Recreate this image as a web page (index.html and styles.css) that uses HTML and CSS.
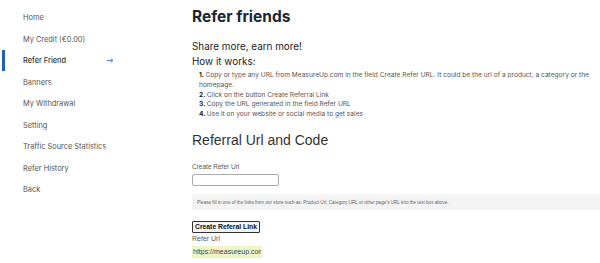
FILE: index.html
```html
<!DOCTYPE html>
<html>
<head>
<meta charset="utf-8">
<link rel="stylesheet" href="styles.css">
</head>
<body>
<div class="page">
  <nav class="sidebar">
    <a class="nav-item">Home</a>
    <a class="nav-item">My Credit (€0.00)</a>
    <a class="nav-item active">Refer Friend
      <svg class="arrow" width="7" height="5" viewBox="0 0 7 5"><path d="M0 2.5H6M4 0.8L6 2.5L4 4.2" fill="none" stroke="#3b82f6" stroke-width="1"/></svg>
    </a>
    <a class="nav-item">Banners</a>
    <a class="nav-item">My Withdrawal</a>
    <a class="nav-item">Setting</a>
    <a class="nav-item">Traffic Source Statistics</a>
    <a class="nav-item">Refer History</a>
    <a class="nav-item">Back</a>
  </nav>
  <main class="main">
    <h1 class="title">Refer friends</h1>
    <p class="lead share">Share more, earn more!</p>
    <p class="lead how">How it works:</p>
    <ol class="steps">
      <li>Copy or type any URL from MeasureUp.com in the field Create Refer URL. It could be the url of a product, a category or the homepage.</li>
      <li>Click on the button Create Referral Link</li>
      <li>Copy the URL generated in the field Refer URL</li>
      <li>Use it on your website or social media to get sales</li>
    </ol>
    <h2 class="section">Referral Url and Code</h2>
    <label class="label">Create Refer Url</label>
    <input class="field" type="text">
    <div class="hint">Please fill in one of the links from our store such as: Product Url, Category URL or other page's URL into the text box above.</div>
    <button class="btn">Create Referal Link</button>
    <div class="label2">Refer Url</div>
    <input class="result" type="text" value="https://measureup.com/?ref=12345" readonly>
  </main>
</div>
</body>
</html>
```
FILE: styles.css
```css
html, body {
  margin: 0;
  padding: 0;
  background: #fff;
  overflow: hidden;
}
.page {
  display: flex;
  font-family: Inter, "Noto Sans", sans-serif;
  color: #444;
}
.sidebar {
  width: 192px;
  flex: none;
  padding-top: 7px;
  display: flex;
  flex-direction: column;
}
.nav-item {
  position: relative;
  height: 21.5px;
  display: flex;
  align-items: center;
  padding-left: 23px;
  font-size: 7.4px;
  color: #555;
}
.nav-item.active {
  color: #333;
  font-weight: 500;
}
.nav-item.active::before {
  content: "";
  position: absolute;
  left: 2px;
  top: 0;
  width: 2.5px;
  height: 21px;
  background: #1d5fc4;
}
.arrow {
  position: absolute;
  left: 107px;
  top: 8px;
}
.main {
  flex: 1;
  min-width: 0;
  padding-right: 4px;
}
.title {
  margin: 7px 0 0;
  font-size: 15.5px;
  line-height: 20px;
  font-weight: 700;
  color: #1e2633;
}
.lead {
  margin: 0;
  font-size: 9.9px;
  line-height: 13px;
  color: #222;
}
.share {
  margin-top: 13px;
}
.how {
  margin-top: 2px;
}
.steps {
  list-style: none;
  counter-reset: step;
  margin: 3px 0 0;
  padding-left: 7px;
  font-size: 6.6px;
  line-height: 9.8px;
  color: #555;
}
.steps li {
  counter-increment: step;
}
.steps li::before {
  content: counter(step) ". ";
  font-weight: 700;
  color: #222;
}
.section {
  margin: 11px 0 0;
  font-family: "Liberation Sans", Arial, sans-serif;
  font-weight: 400;
  font-size: 14px;
  line-height: 18px;
  color: #333;
}
.label {
  display: block;
  margin-top: 13px;
  font-family: "Liberation Sans", Arial, sans-serif;
  font-size: 6.5px;
  line-height: 9px;
  color: #555;
}
.field {
  display: block;
  box-sizing: border-box;
  margin-top: 3px;
  width: 87px;
  height: 12px;
  border: 1px solid #aaa;
  border-radius: 2px;
  padding: 0 3px;
}
.hint {
  margin-top: 8px;
  margin-right: -10px;
  background: #f3f3f3;
  border-top: 1px solid #f8f8f8;
  height: 15px;
  padding-left: 5px;
  display: flex;
  align-items: center;
  font-family: "Liberation Sans", Arial, sans-serif;
  font-size: 4.6px;
  color: #666;
  white-space: nowrap;
}
.btn {
  display: block;
  margin-top: 11px;
  height: 12px;
  padding: 0 2px;
  box-sizing: border-box;
  border: 1.5px solid #333;
  border-radius: 1px;
  background: #f4f4f4;
  font-family: "Liberation Sans", Arial, sans-serif;
  font-weight: 700;
  font-size: 6.8px;
  line-height: 9px;
  color: #111;
}
.label2 {
  margin-top: 1px;
  font-family: "Liberation Sans", Arial, sans-serif;
  font-size: 7px;
  line-height: 10px;
  color: #555;
}
.result {
  display: block;
  box-sizing: border-box;
  margin-top: 2px;
  width: 70px;
  height: 12px;
  border: none;
  background: #eef5c7;
  padding: 0 1px;
  font-family: "Liberation Sans", Arial, sans-serif;
  font-size: 7px;
  color: #444;
}
```
